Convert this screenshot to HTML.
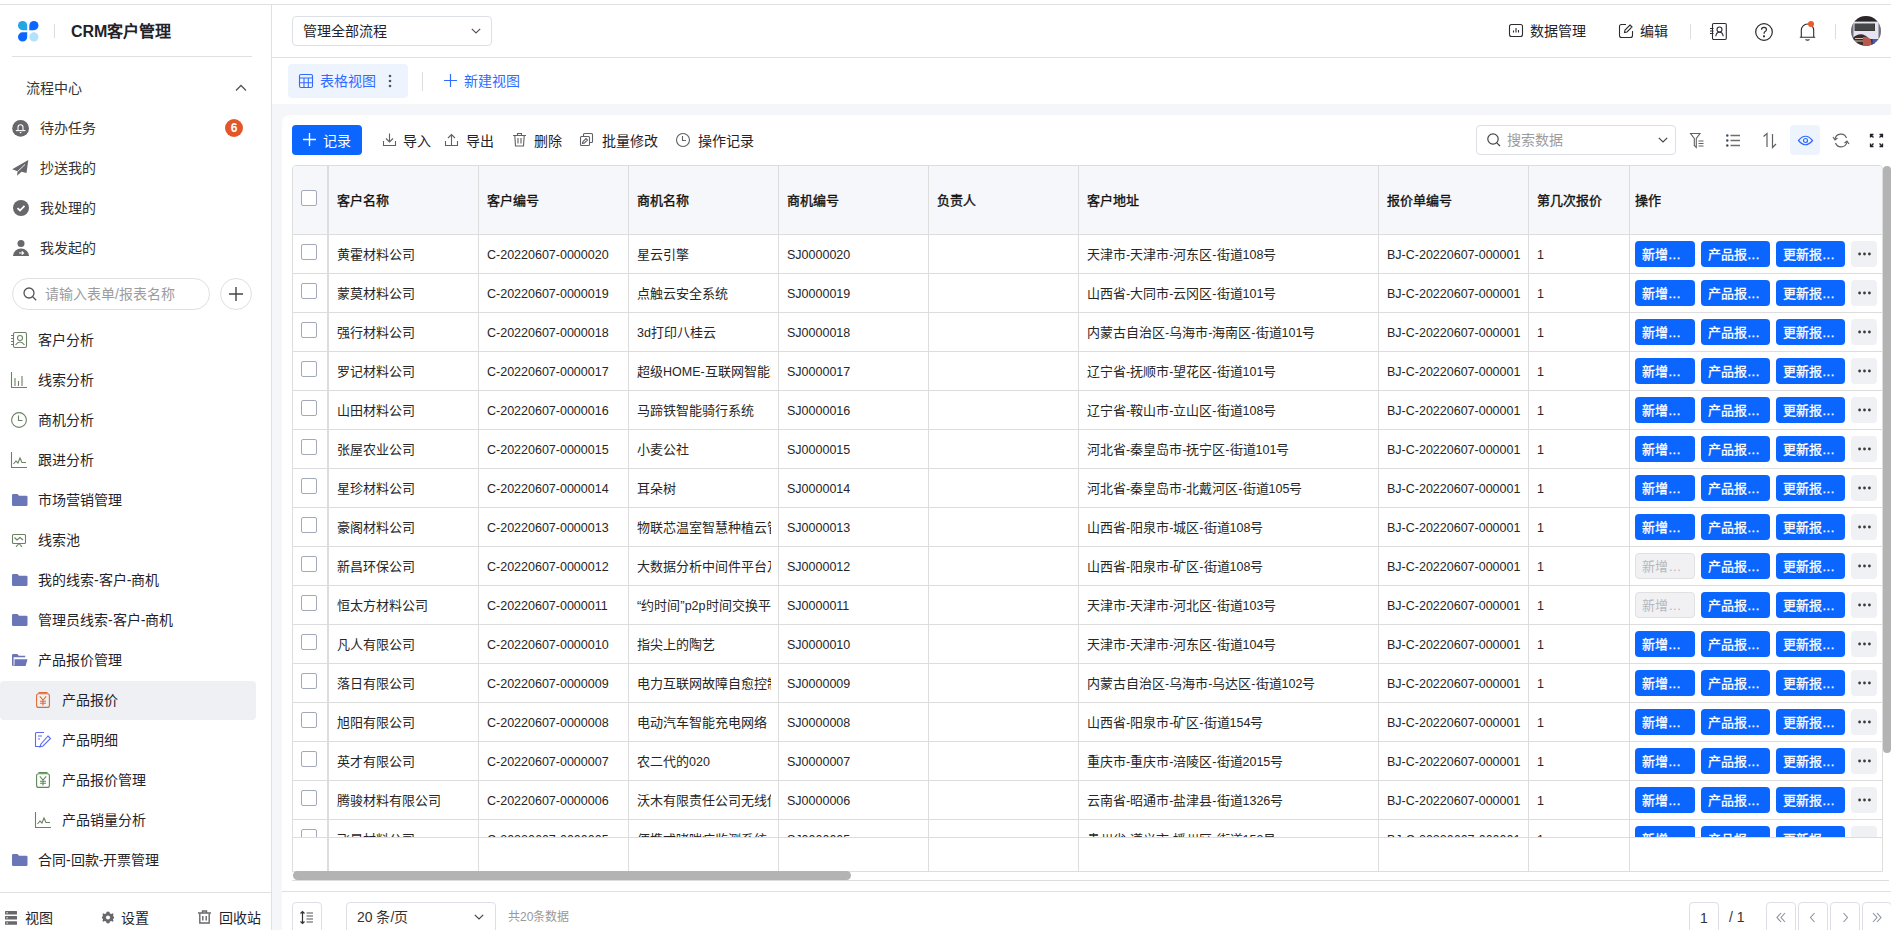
<!DOCTYPE html><html lang="zh-CN"><head><meta charset="utf-8"><title>CRM</title><style>*{box-sizing:border-box;margin:0;padding:0}
html,body{width:1891px;height:930px;overflow:hidden}
body{position:relative;background:#fff;font-family:"Liberation Sans",sans-serif;color:#1f2329;white-space:nowrap}
.a{position:absolute}
svg{position:absolute;overflow:visible}
.l{font-size:12.5px}
.dd{letter-spacing:0.5px;margin-left:1px}
</style></head><body>
<div class="a" style="left:0;top:0;width:1891px;height:4px;background:#fff"></div>
<div class="a" style="left:0;top:4px;width:1891px;height:1px;background:#e0e0e2"></div>
<div class="a" style="left:271px;top:5px;width:1px;height:925px;background:#e0e0e2"></div>
<svg style="left:18px;top:21px" width="20.5" height="20.5" viewBox="0 0 21 21">
<path d="M9.4 9.4 H4.7 A4.7 4.7 0 1 1 9.4 4.7Z" fill="#23a6e3"/>
<path d="M11.6 9.4 H16.3 A4.7 4.7 0 1 0 11.6 4.7Z" fill="#0a66ff"/>
<path d="M9.4 11.6 H4.7 A4.7 4.7 0 1 0 9.4 16.3Z" fill="#0a66ff"/>
<circle cx="16.3" cy="16.3" r="4.7" fill="#b4e1fb"/>
</svg>
<div class="a" style="left:54px;top:24px;width:1px;height:14px;background:#dcdde1"></div>
<div class="a" style="left:71px;top:19.5px;line-height:24px;font-size:16px;color:#1f2329;font-weight:bold;">CRM客户管理</div>
<div class="a" style="left:12px;top:56px;width:240px;height:1px;background:#e0e0e2"></div>
<div class="a" style="left:26px;top:78.0px;line-height:20px;font-size:14px;color:#333;font-weight:normal;">流程中心</div>
<svg style="left:235px;top:84px" width="12" height="8" viewBox="0 0 12 8"><path d="M1 6.5 L6 1.5 L11 6.5" fill="none" stroke="#555" stroke-width="1.3"/></svg>
<svg style="left:12px;top:120px" width="17" height="17" viewBox="0 0 17 17"><circle cx="8.6" cy="8.4" r="8.4" fill="#67676c"/><path d="M6 10.4 V7.2 A2.5 2.5 0 0 1 11 7.2 V10.4" fill="none" stroke="#fff" stroke-width="1.1"/><path d="M3.8 10.6 H13.4" stroke="#fff" stroke-width="1.1"/><path d="M7.4 12 H9.8 L8.6 13.6Z" fill="#fff"/></svg>
<div class="a" style="left:40px;top:118.0px;line-height:20px;font-size:14px;color:#333;font-weight:normal;">待办任务</div>
<svg style="left:12px;top:160px" width="17" height="17" viewBox="0 0 17 17"><path d="M0.2 9.2 L16.3 0.1 L14.5 13 L9.5 11.8 L5 15.8 L5.6 11.2Z" fill="#67676c"/><path d="M5.6 11.5 L13 4.5" stroke="#fff" stroke-width="0.9"/></svg>
<div class="a" style="left:40px;top:158.0px;line-height:20px;font-size:14px;color:#333;font-weight:normal;">抄送我的</div>
<svg style="left:13px;top:200px" width="16" height="16" viewBox="0 0 16 16"><circle cx="8" cy="8" r="8" fill="#67676c"/><path d="M4.5 8.2 L7 10.5 L11.5 5.8" fill="none" stroke="#fff" stroke-width="1.8"/></svg>
<div class="a" style="left:40px;top:198.0px;line-height:20px;font-size:14px;color:#333;font-weight:normal;">我处理的</div>
<svg style="left:13px;top:240px" width="16" height="16" viewBox="0 0 16 16"><circle cx="8" cy="3.5" r="3.5" fill="#67676c"/><path d="M0 16 A8 7.5 0 0 1 16 16Z" fill="#67676c"/><path d="M6 13 L10.5 13 M8.8 11.3 L10.5 13 L8.8 14.7" fill="none" stroke="#fff" stroke-width="1.2"/></svg>
<div class="a" style="left:40px;top:238.0px;line-height:20px;font-size:14px;color:#333;font-weight:normal;">我发起的</div>
<div class="a" style="left:225px;top:119px;width:18px;height:18px;border-radius:9px;background:#e3562b;color:#fff;font-size:12px;line-height:18px;text-align:center;font-weight:bold">6</div>
<div class="a" style="left:12px;top:278px;width:198px;height:32px;border:1px solid #dfe0e4;border-radius:16px;background:#fff"></div>
<svg style="left:23px;top:287px" width="14" height="14" viewBox="0 0 14 14"><circle cx="6" cy="6" r="5" fill="none" stroke="#555" stroke-width="1.3"/><path d="M9.7 9.7 L13.2 13.2" stroke="#555" stroke-width="1.3"/></svg>
<div class="a" style="left:45px;top:284.0px;line-height:20px;font-size:14px;color:#9c9c9f;font-weight:normal;">请输入表单/报表名称</div>
<div class="a" style="left:220px;top:278px;width:32px;height:32px;border:1px solid #dfe0e4;border-radius:16px;background:#fff"></div>
<svg style="left:229px;top:287px" width="14" height="14" viewBox="0 0 14 14"><path d="M7 0 V14 M0 7 H14" stroke="#444" stroke-width="1.4"/></svg>
<svg style="left:11px;top:332px" width="16" height="16" viewBox="0 0 16 16" fill="none" stroke="#6b8263" stroke-width="1.1"><rect x="2.5" y="0.5" width="13" height="15" rx="1.5"/><circle cx="9" cy="6" r="2.5"/><path d="M4.5 13 Q9 7 13.5 13"/><path d="M0 3.5 H3 M0 6.5 H3 M0 9.5 H3 M0 12.5 H3"/></svg>
<div class="a" style="left:38px;top:330.0px;line-height:20px;font-size:14px;color:#1f2329;font-weight:normal;">客户分析</div>
<svg style="left:11px;top:372px" width="16" height="16" viewBox="0 0 16 16" fill="none" stroke="#6b8263" stroke-width="1.1"><path d="M0.5 0 V15.5 H16"/><path d="M4 6 V14 M7.5 9 V14 M11 4 V14"/></svg>
<div class="a" style="left:38px;top:370.0px;line-height:20px;font-size:14px;color:#1f2329;font-weight:normal;">线索分析</div>
<svg style="left:11px;top:412px" width="16" height="16" viewBox="0 0 16 16" fill="none" stroke="#6b8263" stroke-width="1.1"><circle cx="8" cy="8" r="7.4"/><path d="M7.5 3.5 V8.5 H11.5"/></svg>
<div class="a" style="left:38px;top:410.0px;line-height:20px;font-size:14px;color:#1f2329;font-weight:normal;">商机分析</div>
<svg style="left:11px;top:452px" width="16" height="16" viewBox="0 0 16 16" fill="none" stroke="#6b8263" stroke-width="1.1"><path d="M0.5 0 V15.5 H16"/><path d="M2.5 12 L5 9 L7 11 L9 6 L11 10.5 H15"/></svg>
<div class="a" style="left:38px;top:450.0px;line-height:20px;font-size:14px;color:#1f2329;font-weight:normal;">跟进分析</div>
<svg style="left:11.5px;top:494px" width="15.5" height="12" viewBox="0 0 15.5 12"><path d="M0 1.2 Q0 0 1.2 0 L5.5 0 L7 1.8 L14.3 1.8 Q15.5 1.8 15.5 3 L15.5 10.8 Q15.5 12 14.3 12 L1.2 12 Q0 12 0 10.8Z" fill="#6a76b8"/></svg>
<div class="a" style="left:38px;top:490.0px;line-height:20px;font-size:14px;color:#1f2329;font-weight:normal;">市场营销管理</div>
<svg style="left:12px;top:534px" width="14" height="13" viewBox="0 0 14 13" fill="none" stroke="#6b8263" stroke-width="1.1"><rect x="0.5" y="0.5" width="13" height="9" rx="1"/><path d="M2.5 3.5 L5 6 L8 3.5 L11 6"/><path d="M7 9.5 L4 12.8 M7 9.5 L10 12.8"/></svg>
<div class="a" style="left:38px;top:530.0px;line-height:20px;font-size:14px;color:#1f2329;font-weight:normal;">线索池</div>
<svg style="left:11.5px;top:574px" width="15.5" height="12" viewBox="0 0 15.5 12"><path d="M0 1.2 Q0 0 1.2 0 L5.5 0 L7 1.8 L14.3 1.8 Q15.5 1.8 15.5 3 L15.5 10.8 Q15.5 12 14.3 12 L1.2 12 Q0 12 0 10.8Z" fill="#6a76b8"/></svg>
<div class="a" style="left:38px;top:570.0px;line-height:20px;font-size:14px;color:#1f2329;font-weight:normal;">我的线索-客户-商机</div>
<svg style="left:11.5px;top:614px" width="15.5" height="12" viewBox="0 0 15.5 12"><path d="M0 1.2 Q0 0 1.2 0 L5.5 0 L7 1.8 L14.3 1.8 Q15.5 1.8 15.5 3 L15.5 10.8 Q15.5 12 14.3 12 L1.2 12 Q0 12 0 10.8Z" fill="#6a76b8"/></svg>
<div class="a" style="left:38px;top:610.0px;line-height:20px;font-size:14px;color:#1f2329;font-weight:normal;">管理员线索-客户-商机</div>
<svg style="left:11.5px;top:654px" width="15.5" height="12" viewBox="0 0 15.5 12"><path d="M0 1.2 Q0 0 1.2 0 H5.3 L6.8 1.8 H13.2 V3.2 H1.6 V12 H1 Q0 12 0 11Z" fill="#6a76b8"/><path d="M2.5 5.2 H15.5 L13.6 12 H0.6 Q2.5 12 2.5 10.5Z" fill="#6a76b8"/></svg>
<div class="a" style="left:38px;top:650.0px;line-height:20px;font-size:14px;color:#1f2329;font-weight:normal;">产品报价管理</div>
<div class="a" style="left:0;top:681px;width:256px;height:39px;border-radius:4px;background:#eff0f4"></div>
<svg style="left:36px;top:692px" width="14" height="16" viewBox="0 0 14 16" fill="none" stroke="#e06a32" stroke-width="1.1"><rect x="0.6" y="1.8" width="12.8" height="13.6" rx="2"/><path d="M2.5 0.6 H11.5" stroke-width="1.2"/><path d="M3.8 4.3 L7 8 L10.2 4.3 M7 8 V13.5 M4 9.2 H10 M4 11.3 H10"/></svg>
<div class="a" style="left:62px;top:690.0px;line-height:20px;font-size:14px;color:#1f2329;font-weight:normal;">产品报价</div>
<svg style="left:35px;top:732px" width="16" height="16" viewBox="0 0 16 16" fill="none" stroke="#5a6cf0" stroke-width="1.1"><path d="M9 0.5 H1.5 Q0.5 0.5 0.5 1.5 V14.5 H7"/><path d="M3 4 H7 M3 7 H5"/><path d="M13 4 L15.5 6.5 L8 14 L5 15 L6 12Z"/></svg>
<div class="a" style="left:62px;top:730.0px;line-height:20px;font-size:14px;color:#1f2329;font-weight:normal;">产品明细</div>
<svg style="left:36px;top:772px" width="14" height="16" viewBox="0 0 14 16" fill="none" stroke="#5a8a55" stroke-width="1.1"><rect x="0.6" y="1.8" width="12.8" height="13.6" rx="2"/><path d="M2.5 0.6 H11.5" stroke-width="1.2"/><path d="M3.8 4.3 L7 8 L10.2 4.3 M7 8 V13.5 M4 9.2 H10 M4 11.3 H10"/></svg>
<div class="a" style="left:62px;top:770.0px;line-height:20px;font-size:14px;color:#1f2329;font-weight:normal;">产品报价管理</div>
<svg style="left:35px;top:812px" width="16" height="16" viewBox="0 0 16 16" fill="none" stroke="#6b8263" stroke-width="1.1"><path d="M0.5 0 V15.5 H16"/><path d="M2.5 12 L5 9 L7 11 L9 6 L11 10.5 H15"/></svg>
<div class="a" style="left:62px;top:810.0px;line-height:20px;font-size:14px;color:#1f2329;font-weight:normal;">产品销量分析</div>
<svg style="left:11.5px;top:854px" width="15.5" height="12" viewBox="0 0 15.5 12"><path d="M0 1.2 Q0 0 1.2 0 L5.5 0 L7 1.8 L14.3 1.8 Q15.5 1.8 15.5 3 L15.5 10.8 Q15.5 12 14.3 12 L1.2 12 Q0 12 0 10.8Z" fill="#6a76b8"/></svg>
<div class="a" style="left:38px;top:850.0px;line-height:20px;font-size:14px;color:#1f2329;font-weight:normal;">合同-回款-开票管理</div>
<div class="a" style="left:0;top:892px;width:271px;height:1px;background:#e0e0e2"></div>
<svg style="left:5px;top:911px" width="12" height="14" viewBox="0 0 12 14"><rect x="0" y="0" width="12" height="3.5" rx="0.5" fill="#67676c"/><rect x="0" y="5" width="12" height="3.5" rx="0.5" fill="#67676c"/><rect x="0" y="10.2" width="12" height="3.5" rx="0.5" fill="#67676c"/><rect x="1.5" y="1.2" width="1.2" height="1.2" fill="#fff"/><rect x="1.5" y="6.2" width="1.2" height="1.2" fill="#fff"/><rect x="1.5" y="11.4" width="1.2" height="1.2" fill="#fff"/></svg>
<div class="a" style="left:25px;top:908.0px;line-height:20px;font-size:14px;color:#1f2329;font-weight:normal;">视图</div>
<svg style="left:101px;top:911px" width="14" height="13" viewBox="0 0 14 14"><path d="M7 0.5 L8.6 1 L9 2.6 L10.6 3.2 L12 2.3 L13 3.6 L12.3 5.1 L13.5 6.5 L13.5 7.5 L12.3 8.9 L13 10.4 L12 11.7 L10.6 10.8 L9 11.4 L8.6 13 L7 13.5 L5.4 13 L5 11.4 L3.4 10.8 L2 11.7 L1 10.4 L1.7 8.9 L0.5 7.5 L0.5 6.5 L1.7 5.1 L1 3.6 L2 2.3 L3.4 3.2 L5 2.6 L5.4 1Z" fill="#67676c"/><circle cx="7" cy="7" r="2.2" fill="#fff"/></svg>
<div class="a" style="left:121px;top:908.0px;line-height:20px;font-size:14px;color:#1f2329;font-weight:normal;">设置</div>
<svg style="left:198px;top:910px" width="13" height="14" viewBox="0 0 13 14" fill="none" stroke="#67676c" stroke-width="1.4"><path d="M0 3 H13 M4.5 3 V1 H8.5 V3"/><path d="M1.8 3.5 V13 H11.2 V3.5"/><path d="M4.8 6 V10.5 M8.2 6 V10.5"/></svg>
<div class="a" style="left:219px;top:908.0px;line-height:20px;font-size:14px;color:#1f2329;font-weight:normal;">回收站</div>
<div class="a" style="left:272px;top:57px;width:1619px;height:1px;background:#e0e0e2"></div>
<div class="a" style="left:292px;top:16px;width:200px;height:30px;border:1px solid #dcdfe6;border-radius:4px;background:#fff"></div>
<div class="a" style="left:303px;top:21.0px;line-height:20px;font-size:14px;color:#1f2329;font-weight:normal;">管理全部流程</div>
<svg style="left:471px;top:28px" width="10" height="6" viewBox="0 0 10 6"><path d="M0.8 0.8 L5 5 L9.2 0.8" fill="none" stroke="#555" stroke-width="1.2"/></svg>
<svg style="left:1509px;top:24px" width="14" height="13" viewBox="0 0 14 13" fill="none" stroke="#2b2b30" stroke-width="1.1"><rect x="0.5" y="0.5" width="13" height="12" rx="2"/><path d="M4.5 8.5 V6.5 M7 8.5 V4 M9.5 8.5 V6"/></svg>
<div class="a" style="left:1530px;top:21.0px;line-height:20px;font-size:14px;color:#1f2329;font-weight:normal;">数据管理</div>
<svg style="left:1619px;top:24px" width="14" height="14" viewBox="0 0 14 14" fill="none" stroke="#2b2b30" stroke-width="1.1"><path d="M7 0.5 H2.5 Q0.5 0.5 0.5 2.5 V11.5 Q0.5 13.5 2.5 13.5 H11.5 Q13.5 13.5 13.5 11.5 V7"/><path d="M11 1 L13 3 L8 8 L5.5 8.5 L6 6Z"/></svg>
<div class="a" style="left:1640px;top:21.0px;line-height:20px;font-size:14px;color:#1f2329;font-weight:normal;">编辑</div>
<div class="a" style="left:1690px;top:24px;width:1px;height:15px;background:#dcdde1"></div>
<svg style="left:1710px;top:23px" width="17" height="17" viewBox="0 0 17 17" fill="none" stroke="#2b2b30" stroke-width="1.1"><rect x="2.5" y="0.5" width="13.8" height="16" rx="1.2"/><circle cx="9.5" cy="6.5" r="2.5"/><path d="M5.8 13.2 Q6.2 9.2 9.5 9.2 Q12.8 9.2 13.2 13.2"/><path d="M0 5.5 H3.5 M0 8 H3.5 M0 10.5 H3.5"/></svg>
<svg style="left:1755px;top:23px" width="18" height="18" viewBox="0 0 18 18" fill="none" stroke="#2b2b30" stroke-width="1.2"><circle cx="9" cy="9" r="8.3"/><path d="M6.5 6.8 Q6.5 4.3 9 4.3 Q11.5 4.3 11.5 6.6 Q11.5 8 9.8 8.8 Q9 9.3 9 10.8"/><circle cx="9" cy="13.3" r="0.5" fill="#2b2b30"/></svg>
<svg style="left:1799px;top:23px" width="17" height="18" viewBox="0 0 17 18" fill="none" stroke="#2b2b30" stroke-width="1.1"><path d="M0.8 14.3 H16.2 M2.3 14.3 V7.2 A6.2 6.2 0 0 1 14.7 7.2 V14.3"/><path d="M6.5 16.5 Q8.5 17.8 10.5 16.5"/></svg>
<div class="a" style="left:1808px;top:21px;width:6px;height:6px;border-radius:3px;background:#ee5a2c"></div>
<div class="a" style="left:1835px;top:24px;width:1px;height:15px;background:#dcdde1"></div>
<div class="a" style="left:1851px;top:16px;width:30px;height:30px;border-radius:15px;overflow:hidden"><svg style="left:0;top:0" width="30" height="30" viewBox="0 0 30 30">
<g>
<rect x="0" y="0" width="30" height="30" fill="#e6e4f2"/>
<rect x="0" y="0" width="30" height="5.6" fill="#2a2526"/>
<rect x="0" y="0" width="2.5" height="30" fill="#6f6f78"/>
<rect x="27.5" y="0" width="2.5" height="30" fill="#6f6f78"/>
<rect x="3.5" y="7.5" width="20.5" height="7.5" fill="#3a3a3c"/>
<path d="M4 9 H23 M4 11 H23 M4 13 H23" stroke="#5d6a5a" stroke-width="0.6"/>
<path d="M2 22 Q6 17.5 12 18.5 Q16 19.5 18 23 L24 23 L24 30 L2 30Z" fill="#3b2a2c"/>
<path d="M4 22.5 H14 M4 25 H13" stroke="#d8c0b0" stroke-width="1"/>
<path d="M12 21 Q17 20 20 24 L21 30 L12 30Z" fill="#b75a4e"/>
<rect x="21.5" y="23" width="6" height="7" fill="#4a5bb5"/>
</g></svg></div>
<div class="a" style="left:288px;top:64px;width:120px;height:34px;border-radius:4px;background:#eef4fe"></div>
<svg style="left:299px;top:74px" width="14" height="14" viewBox="0 0 14 14" fill="none" stroke="#2f6bff" stroke-width="1.1"><rect x="0.5" y="0.5" width="13" height="13" rx="1.5"/><path d="M0.5 4 H13.5 M0.5 8.7 H13.5 M5 4 V13.5 M9.3 4 V13.5"/></svg>
<div class="a" style="left:320px;top:71.0px;line-height:20px;font-size:14px;color:#2f6bff;font-weight:normal;">表格视图</div>
<svg style="left:388px;top:74px" width="4" height="14" viewBox="0 0 4 14"><circle cx="2" cy="2" r="1.3" fill="#555"/><circle cx="2" cy="7" r="1.3" fill="#555"/><circle cx="2" cy="12" r="1.3" fill="#555"/></svg>
<div class="a" style="left:422px;top:72px;width:1px;height:19px;background:#dcdde1"></div>
<svg style="left:444px;top:74px" width="13" height="13" viewBox="0 0 13 13"><path d="M6.5 0 V13 M0 6.5 H13" stroke="#2f6bff" stroke-width="1.2"/></svg>
<div class="a" style="left:464px;top:71.0px;line-height:20px;font-size:14px;color:#2f6bff;font-weight:normal;">新建视图</div>
<div class="a" style="left:272px;top:104px;width:1619px;height:826px;background:#f4f6f9"></div>
<div class="a" style="left:282px;top:115px;width:1620px;height:900px;border-radius:8px;background:#fff"></div>
<div class="a" style="left:292px;top:125px;width:70px;height:30px;border-radius:4px;background:#0a66ff"></div>
<svg style="left:303px;top:133px" width="13" height="13" viewBox="0 0 13 13"><path d="M6.5 0 V13 M0 6.5 H13" stroke="#fff" stroke-width="1.4"/></svg>
<div class="a" style="left:323px;top:131.0px;line-height:20px;font-size:14px;color:#fff;font-weight:normal;">记录</div>
<svg style="left:383px;top:133px" width="14" height="14" viewBox="0 0 14 14" fill="none" stroke="#606065" stroke-width="1.1"><path d="M6.5 0.5 V9 M3 5.5 L6.5 9 L10 5.5" /><path d="M0.5 8 V12.5 H12.5 V8"/></svg>
<div class="a" style="left:403px;top:131.0px;line-height:20px;font-size:14px;color:#1f2329;font-weight:normal;">导入</div>
<svg style="left:445px;top:133px" width="14" height="14" viewBox="0 0 14 14" fill="none" stroke="#606065" stroke-width="1.1"><path d="M6.5 12 V1.5 M3 5 L6.5 1.5 L10 5" /><path d="M0.5 8 V12.5 H12.5 V8"/></svg>
<div class="a" style="left:466px;top:131.0px;line-height:20px;font-size:14px;color:#1f2329;font-weight:normal;">导出</div>
<svg style="left:513px;top:133px" width="14" height="14" viewBox="0 0 14 14" fill="none" stroke="#606065" stroke-width="1.1"><path d="M0 2.5 H13 M4.5 2.5 V0.5 H8.5 V2.5"/><path d="M1.8 2.5 L2.5 13 H10.5 L11.2 2.5"/><path d="M5 5 V10.5 M8 5 V10.5"/></svg>
<div class="a" style="left:534px;top:131.0px;line-height:20px;font-size:14px;color:#1f2329;font-weight:normal;">删除</div>
<svg style="left:580px;top:133px" width="14" height="14" viewBox="0 0 14 14" fill="none" stroke="#606065" stroke-width="1.1"><rect x="0.5" y="3.5" width="9" height="9" rx="1"/><path d="M3.5 3.5 V1.5 Q3.5 0.5 4.5 0.5 H11.5 Q12.5 0.5 12.5 1.5 V8.5 Q12.5 9.5 11.5 9.5 H9.5"/><path d="M2.5 10.5 L3 8.5 L6 5.5 L7.5 7 L4.5 10Z"/></svg>
<div class="a" style="left:602px;top:131.0px;line-height:20px;font-size:14px;color:#1f2329;font-weight:normal;">批量修改</div>
<svg style="left:676px;top:133px" width="14" height="14" viewBox="0 0 14 14" fill="none" stroke="#606065" stroke-width="1.1"><circle cx="7" cy="7" r="6.5"/><path d="M6.5 3 V7.5 H10"/></svg>
<div class="a" style="left:698px;top:131.0px;line-height:20px;font-size:14px;color:#1f2329;font-weight:normal;">操作记录</div>
<div class="a" style="left:1476px;top:125px;width:200px;height:30px;border:1px solid #dcdfe6;border-radius:4px;background:#fff"></div>
<svg style="left:1487px;top:133px" width="14" height="14" viewBox="0 0 14 14" fill="none" stroke="#444" stroke-width="1.2"><circle cx="6" cy="6" r="5.2"/><path d="M9.8 9.8 L13 13"/></svg>
<div class="a" style="left:1507px;top:130.0px;line-height:20px;font-size:14px;color:#9c9c9f;font-weight:normal;">搜索数据</div>
<svg style="left:1658px;top:137px" width="10" height="6" viewBox="0 0 10 6"><path d="M0.8 0.8 L5 5 L9.2 0.8" fill="none" stroke="#444" stroke-width="1.2"/></svg>
<div class="a" style="left:1790px;top:125px;width:30px;height:30px;border-radius:4px;background:#eef4fe"></div>
<svg style="left:1690px;top:133px" width="15" height="15" viewBox="0 0 15 15" fill="none" stroke="#606065" stroke-width="1.1"><path d="M0.5 0.5 H10 L6.3 5.5 V14.5 L4.3 12.5 V5.5Z"/><path d="M8.5 8 H13.5 M8.5 10.5 H13.5 M8.5 13 H13.5"/></svg>
<svg style="left:1726px;top:134px" width="14" height="13" viewBox="0 0 14 13"><circle cx="1.3" cy="1.5" r="1.2" fill="#3a4a60"/><circle cx="1.3" cy="6.5" r="1.2" fill="#3a4a60"/><circle cx="1.3" cy="11.5" r="1.2" fill="#3a4a60"/><path d="M4.5 1.5 H14 M4.5 6.5 H14 M4.5 11.5 H14" stroke="#6c6f6a" stroke-width="1.4"/></svg>
<svg style="left:1763px;top:133px" width="14" height="15" viewBox="0 0 14 15" fill="none" stroke="#606065" stroke-width="1.2"><path d="M0.5 3.5 L4 0.5 V14"/><path d="M9.5 1 V14.5 L13 11"/></svg>
<svg style="left:1798px;top:135px" width="15" height="11" viewBox="0 0 15 11" fill="none" stroke="#2f6bff" stroke-width="1.2"><path d="M0.5 5.5 Q7.5 -3 14.5 5.5 Q7.5 14 0.5 5.5Z"/><circle cx="7.5" cy="5.5" r="2"/></svg>
<svg style="left:1833px;top:133px" width="16" height="15" viewBox="0 0 16 15" fill="none" stroke="#606065" stroke-width="1.2"><path d="M2 6 A6 6 0 0 1 13.5 5"/><path d="M14 9 A6 6 0 0 1 2.5 10"/><path d="M0 4 L2 6.8 L4.5 5" /><path d="M16 11 L14 8.2 L11.5 10"/></svg>
<svg style="left:1870px;top:134px" width="13" height="13" viewBox="0 0 13 13" fill="none" stroke="#1f2329" stroke-width="1.3"><path d="M0.5 3.5 V0.5 H3.5 M0.8 0.8 L3.5 3.5"/><path d="M9.5 0.5 H12.5 V3.5 M12.2 0.8 L9.5 3.5"/><path d="M0.5 9.5 V12.5 H3.5 M0.8 12.2 L3.5 9.5"/><path d="M12.5 9.5 V12.5 H9.5 M12.2 12.2 L9.5 9.5"/></svg>
<div class="a" style="left:292px;top:165px;width:1591px;height:707px;border:1px solid #dddddd;border-radius:4px 4px 0 0;background:#fff"></div>
<div class="a" style="left:293px;top:166px;width:1589px;height:68px;background:#f5f7fa;border-radius:3px 3px 0 0"></div>
<div class="a" style="left:293px;top:234px;width:1589px;height:1px;background:#dddddd"></div>
<div class="a" style="left:327px;top:166px;width:2px;height:705px;background:#dddddd"></div>
<div class="a" style="left:478px;top:166px;width:1px;height:705px;background:#dddddd"></div>
<div class="a" style="left:628px;top:166px;width:1px;height:705px;background:#dddddd"></div>
<div class="a" style="left:778px;top:166px;width:1px;height:705px;background:#dddddd"></div>
<div class="a" style="left:928px;top:166px;width:1px;height:705px;background:#dddddd"></div>
<div class="a" style="left:1078px;top:166px;width:1px;height:705px;background:#dddddd"></div>
<div class="a" style="left:1378px;top:166px;width:1px;height:705px;background:#dddddd"></div>
<div class="a" style="left:1528px;top:166px;width:1px;height:705px;background:#dddddd"></div>
<div class="a" style="left:1629px;top:166px;width:1px;height:705px;background:#dddddd"></div>
<div class="a" style="left:301px;top:190px;width:16px;height:16px;border:1px solid #a3a9bb;border-radius:2px;background:#fff"></div>
<div class="a" style="left:337px;top:191.0px;line-height:20px;font-size:13px;color:#111;font-weight:normal;-webkit-text-stroke:0.35px #111;">客户名称</div>
<div class="a" style="left:487px;top:191.0px;line-height:20px;font-size:13px;color:#111;font-weight:normal;-webkit-text-stroke:0.35px #111;">客户编号</div>
<div class="a" style="left:637px;top:191.0px;line-height:20px;font-size:13px;color:#111;font-weight:normal;-webkit-text-stroke:0.35px #111;">商机名称</div>
<div class="a" style="left:787px;top:191.0px;line-height:20px;font-size:13px;color:#111;font-weight:normal;-webkit-text-stroke:0.35px #111;">商机编号</div>
<div class="a" style="left:937px;top:191.0px;line-height:20px;font-size:13px;color:#111;font-weight:normal;-webkit-text-stroke:0.35px #111;">负责人</div>
<div class="a" style="left:1087px;top:191.0px;line-height:20px;font-size:13px;color:#111;font-weight:normal;-webkit-text-stroke:0.35px #111;">客户地址</div>
<div class="a" style="left:1387px;top:191.0px;line-height:20px;font-size:13px;color:#111;font-weight:normal;-webkit-text-stroke:0.35px #111;">报价单编号</div>
<div class="a" style="left:1537px;top:191.0px;line-height:20px;font-size:13px;color:#111;font-weight:normal;-webkit-text-stroke:0.35px #111;">第几次报价</div>
<div class="a" style="left:1635px;top:191.0px;line-height:20px;font-size:13px;color:#111;font-weight:normal;-webkit-text-stroke:0.35px #111;">操作</div>
<div class="a" style="left:293px;top:235px;width:1589px;height:602px;overflow:hidden">
<div class="a" style="left:8px;top:9px;width:16px;height:16px;border:1px solid #a3a9bb;border-radius:2px;background:#fff"></div>
<div class="a" style="left:44px;top:9.5px;line-height:20px;font-size:13px;color:#262626;">黄霍材料公司</div>
<div class="a" style="left:194px;top:9.5px;line-height:20px;font-size:13px;color:#262626;"><span class="l">C-20220607-0000020</span></div>
<div class="a" style="left:344px;top:9.5px;line-height:20px;font-size:13px;color:#262626;width:134px;overflow:hidden;">星云引擎</div>
<div class="a" style="left:494px;top:9.5px;line-height:20px;font-size:13px;color:#262626;"><span class="l">SJ0000020</span></div>
<div class="a" style="left:794px;top:9.5px;line-height:20px;font-size:13px;color:#262626;">天津市<span class="l">-</span>天津市<span class="l">-</span>河东区<span class="l">-</span>街道<span class="l">108</span>号</div>
<div class="a" style="left:1094px;top:9.5px;line-height:20px;font-size:13px;color:#262626;"><span class="l">BJ-C-20220607-000001</span></div>
<div class="a" style="left:1244px;top:9.5px;line-height:20px;font-size:13px;color:#262626;"><span class="l">1</span></div>
<div class="a" style="left:1342px;top:6px;width:60px;height:26px;border-radius:4px;background:#0a66ff;color:#fff;font-size:13px;line-height:27px;padding-left:6.5px;-webkit-text-stroke:0.3px #fff">新增<span class="dd">...</span></div>
<div class="a" style="left:1408px;top:6px;width:69px;height:26px;border-radius:4px;background:#0a66ff;color:#fff;font-size:13px;line-height:27px;padding-left:6.5px;-webkit-text-stroke:0.3px #fff">产品报<span class="dd">...</span></div>
<div class="a" style="left:1483px;top:6px;width:69px;height:26px;border-radius:4px;background:#0a66ff;color:#fff;font-size:13px;line-height:27px;padding-left:6.5px;-webkit-text-stroke:0.3px #fff">更新报<span class="dd">...</span></div>
<div class="a" style="left:1558px;top:6px;width:26px;height:26px;border-radius:4px;background:#f0f1f5"></div>
<svg style="left:1565px;top:17px" width="12" height="4" viewBox="0 0 12 4"><circle cx="1.6" cy="2" r="1.4" fill="#3a3a3a"/><circle cx="6.5" cy="2" r="1.4" fill="#3a3a3a"/><circle cx="11.4" cy="2" r="1.4" fill="#3a3a3a"/></svg>
<div class="a" style="left:0;top:38px;width:1589px;height:1px;background:#dddddd"></div>
<div class="a" style="left:8px;top:48px;width:16px;height:16px;border:1px solid #a3a9bb;border-radius:2px;background:#fff"></div>
<div class="a" style="left:44px;top:48.5px;line-height:20px;font-size:13px;color:#262626;">蒙莫材料公司</div>
<div class="a" style="left:194px;top:48.5px;line-height:20px;font-size:13px;color:#262626;"><span class="l">C-20220607-0000019</span></div>
<div class="a" style="left:344px;top:48.5px;line-height:20px;font-size:13px;color:#262626;width:134px;overflow:hidden;">点触云安全系统</div>
<div class="a" style="left:494px;top:48.5px;line-height:20px;font-size:13px;color:#262626;"><span class="l">SJ0000019</span></div>
<div class="a" style="left:794px;top:48.5px;line-height:20px;font-size:13px;color:#262626;">山西省<span class="l">-</span>大同市<span class="l">-</span>云冈区<span class="l">-</span>街道<span class="l">101</span>号</div>
<div class="a" style="left:1094px;top:48.5px;line-height:20px;font-size:13px;color:#262626;"><span class="l">BJ-C-20220607-000001</span></div>
<div class="a" style="left:1244px;top:48.5px;line-height:20px;font-size:13px;color:#262626;"><span class="l">1</span></div>
<div class="a" style="left:1342px;top:45px;width:60px;height:26px;border-radius:4px;background:#0a66ff;color:#fff;font-size:13px;line-height:27px;padding-left:6.5px;-webkit-text-stroke:0.3px #fff">新增<span class="dd">...</span></div>
<div class="a" style="left:1408px;top:45px;width:69px;height:26px;border-radius:4px;background:#0a66ff;color:#fff;font-size:13px;line-height:27px;padding-left:6.5px;-webkit-text-stroke:0.3px #fff">产品报<span class="dd">...</span></div>
<div class="a" style="left:1483px;top:45px;width:69px;height:26px;border-radius:4px;background:#0a66ff;color:#fff;font-size:13px;line-height:27px;padding-left:6.5px;-webkit-text-stroke:0.3px #fff">更新报<span class="dd">...</span></div>
<div class="a" style="left:1558px;top:45px;width:26px;height:26px;border-radius:4px;background:#f0f1f5"></div>
<svg style="left:1565px;top:56px" width="12" height="4" viewBox="0 0 12 4"><circle cx="1.6" cy="2" r="1.4" fill="#3a3a3a"/><circle cx="6.5" cy="2" r="1.4" fill="#3a3a3a"/><circle cx="11.4" cy="2" r="1.4" fill="#3a3a3a"/></svg>
<div class="a" style="left:0;top:77px;width:1589px;height:1px;background:#dddddd"></div>
<div class="a" style="left:8px;top:87px;width:16px;height:16px;border:1px solid #a3a9bb;border-radius:2px;background:#fff"></div>
<div class="a" style="left:44px;top:87.5px;line-height:20px;font-size:13px;color:#262626;">强行材料公司</div>
<div class="a" style="left:194px;top:87.5px;line-height:20px;font-size:13px;color:#262626;"><span class="l">C-20220607-0000018</span></div>
<div class="a" style="left:344px;top:87.5px;line-height:20px;font-size:13px;color:#262626;width:134px;overflow:hidden;"><span class="l">3d</span>打印八桂云</div>
<div class="a" style="left:494px;top:87.5px;line-height:20px;font-size:13px;color:#262626;"><span class="l">SJ0000018</span></div>
<div class="a" style="left:794px;top:87.5px;line-height:20px;font-size:13px;color:#262626;">内蒙古自治区<span class="l">-</span>乌海市<span class="l">-</span>海南区<span class="l">-</span>街道<span class="l">101</span>号</div>
<div class="a" style="left:1094px;top:87.5px;line-height:20px;font-size:13px;color:#262626;"><span class="l">BJ-C-20220607-000001</span></div>
<div class="a" style="left:1244px;top:87.5px;line-height:20px;font-size:13px;color:#262626;"><span class="l">1</span></div>
<div class="a" style="left:1342px;top:84px;width:60px;height:26px;border-radius:4px;background:#0a66ff;color:#fff;font-size:13px;line-height:27px;padding-left:6.5px;-webkit-text-stroke:0.3px #fff">新增<span class="dd">...</span></div>
<div class="a" style="left:1408px;top:84px;width:69px;height:26px;border-radius:4px;background:#0a66ff;color:#fff;font-size:13px;line-height:27px;padding-left:6.5px;-webkit-text-stroke:0.3px #fff">产品报<span class="dd">...</span></div>
<div class="a" style="left:1483px;top:84px;width:69px;height:26px;border-radius:4px;background:#0a66ff;color:#fff;font-size:13px;line-height:27px;padding-left:6.5px;-webkit-text-stroke:0.3px #fff">更新报<span class="dd">...</span></div>
<div class="a" style="left:1558px;top:84px;width:26px;height:26px;border-radius:4px;background:#f0f1f5"></div>
<svg style="left:1565px;top:95px" width="12" height="4" viewBox="0 0 12 4"><circle cx="1.6" cy="2" r="1.4" fill="#3a3a3a"/><circle cx="6.5" cy="2" r="1.4" fill="#3a3a3a"/><circle cx="11.4" cy="2" r="1.4" fill="#3a3a3a"/></svg>
<div class="a" style="left:0;top:116px;width:1589px;height:1px;background:#dddddd"></div>
<div class="a" style="left:8px;top:126px;width:16px;height:16px;border:1px solid #a3a9bb;border-radius:2px;background:#fff"></div>
<div class="a" style="left:44px;top:126.5px;line-height:20px;font-size:13px;color:#262626;">罗记材料公司</div>
<div class="a" style="left:194px;top:126.5px;line-height:20px;font-size:13px;color:#262626;"><span class="l">C-20220607-0000017</span></div>
<div class="a" style="left:344px;top:126.5px;line-height:20px;font-size:13px;color:#262626;width:134px;overflow:hidden;">超级<span class="l">HOME-</span>互联网智能家居</div>
<div class="a" style="left:494px;top:126.5px;line-height:20px;font-size:13px;color:#262626;"><span class="l">SJ0000017</span></div>
<div class="a" style="left:794px;top:126.5px;line-height:20px;font-size:13px;color:#262626;">辽宁省<span class="l">-</span>抚顺市<span class="l">-</span>望花区<span class="l">-</span>街道<span class="l">101</span>号</div>
<div class="a" style="left:1094px;top:126.5px;line-height:20px;font-size:13px;color:#262626;"><span class="l">BJ-C-20220607-000001</span></div>
<div class="a" style="left:1244px;top:126.5px;line-height:20px;font-size:13px;color:#262626;"><span class="l">1</span></div>
<div class="a" style="left:1342px;top:123px;width:60px;height:26px;border-radius:4px;background:#0a66ff;color:#fff;font-size:13px;line-height:27px;padding-left:6.5px;-webkit-text-stroke:0.3px #fff">新增<span class="dd">...</span></div>
<div class="a" style="left:1408px;top:123px;width:69px;height:26px;border-radius:4px;background:#0a66ff;color:#fff;font-size:13px;line-height:27px;padding-left:6.5px;-webkit-text-stroke:0.3px #fff">产品报<span class="dd">...</span></div>
<div class="a" style="left:1483px;top:123px;width:69px;height:26px;border-radius:4px;background:#0a66ff;color:#fff;font-size:13px;line-height:27px;padding-left:6.5px;-webkit-text-stroke:0.3px #fff">更新报<span class="dd">...</span></div>
<div class="a" style="left:1558px;top:123px;width:26px;height:26px;border-radius:4px;background:#f0f1f5"></div>
<svg style="left:1565px;top:134px" width="12" height="4" viewBox="0 0 12 4"><circle cx="1.6" cy="2" r="1.4" fill="#3a3a3a"/><circle cx="6.5" cy="2" r="1.4" fill="#3a3a3a"/><circle cx="11.4" cy="2" r="1.4" fill="#3a3a3a"/></svg>
<div class="a" style="left:0;top:155px;width:1589px;height:1px;background:#dddddd"></div>
<div class="a" style="left:8px;top:165px;width:16px;height:16px;border:1px solid #a3a9bb;border-radius:2px;background:#fff"></div>
<div class="a" style="left:44px;top:165.5px;line-height:20px;font-size:13px;color:#262626;">山田材料公司</div>
<div class="a" style="left:194px;top:165.5px;line-height:20px;font-size:13px;color:#262626;"><span class="l">C-20220607-0000016</span></div>
<div class="a" style="left:344px;top:165.5px;line-height:20px;font-size:13px;color:#262626;width:134px;overflow:hidden;">马蹄铁智能骑行系统</div>
<div class="a" style="left:494px;top:165.5px;line-height:20px;font-size:13px;color:#262626;"><span class="l">SJ0000016</span></div>
<div class="a" style="left:794px;top:165.5px;line-height:20px;font-size:13px;color:#262626;">辽宁省<span class="l">-</span>鞍山市<span class="l">-</span>立山区<span class="l">-</span>街道<span class="l">108</span>号</div>
<div class="a" style="left:1094px;top:165.5px;line-height:20px;font-size:13px;color:#262626;"><span class="l">BJ-C-20220607-000001</span></div>
<div class="a" style="left:1244px;top:165.5px;line-height:20px;font-size:13px;color:#262626;"><span class="l">1</span></div>
<div class="a" style="left:1342px;top:162px;width:60px;height:26px;border-radius:4px;background:#0a66ff;color:#fff;font-size:13px;line-height:27px;padding-left:6.5px;-webkit-text-stroke:0.3px #fff">新增<span class="dd">...</span></div>
<div class="a" style="left:1408px;top:162px;width:69px;height:26px;border-radius:4px;background:#0a66ff;color:#fff;font-size:13px;line-height:27px;padding-left:6.5px;-webkit-text-stroke:0.3px #fff">产品报<span class="dd">...</span></div>
<div class="a" style="left:1483px;top:162px;width:69px;height:26px;border-radius:4px;background:#0a66ff;color:#fff;font-size:13px;line-height:27px;padding-left:6.5px;-webkit-text-stroke:0.3px #fff">更新报<span class="dd">...</span></div>
<div class="a" style="left:1558px;top:162px;width:26px;height:26px;border-radius:4px;background:#f0f1f5"></div>
<svg style="left:1565px;top:173px" width="12" height="4" viewBox="0 0 12 4"><circle cx="1.6" cy="2" r="1.4" fill="#3a3a3a"/><circle cx="6.5" cy="2" r="1.4" fill="#3a3a3a"/><circle cx="11.4" cy="2" r="1.4" fill="#3a3a3a"/></svg>
<div class="a" style="left:0;top:194px;width:1589px;height:1px;background:#dddddd"></div>
<div class="a" style="left:8px;top:204px;width:16px;height:16px;border:1px solid #a3a9bb;border-radius:2px;background:#fff"></div>
<div class="a" style="left:44px;top:204.5px;line-height:20px;font-size:13px;color:#262626;">张屋农业公司</div>
<div class="a" style="left:194px;top:204.5px;line-height:20px;font-size:13px;color:#262626;"><span class="l">C-20220607-0000015</span></div>
<div class="a" style="left:344px;top:204.5px;line-height:20px;font-size:13px;color:#262626;width:134px;overflow:hidden;">小麦公社</div>
<div class="a" style="left:494px;top:204.5px;line-height:20px;font-size:13px;color:#262626;"><span class="l">SJ0000015</span></div>
<div class="a" style="left:794px;top:204.5px;line-height:20px;font-size:13px;color:#262626;">河北省<span class="l">-</span>秦皇岛市<span class="l">-</span>抚宁区<span class="l">-</span>街道<span class="l">101</span>号</div>
<div class="a" style="left:1094px;top:204.5px;line-height:20px;font-size:13px;color:#262626;"><span class="l">BJ-C-20220607-000001</span></div>
<div class="a" style="left:1244px;top:204.5px;line-height:20px;font-size:13px;color:#262626;"><span class="l">1</span></div>
<div class="a" style="left:1342px;top:201px;width:60px;height:26px;border-radius:4px;background:#0a66ff;color:#fff;font-size:13px;line-height:27px;padding-left:6.5px;-webkit-text-stroke:0.3px #fff">新增<span class="dd">...</span></div>
<div class="a" style="left:1408px;top:201px;width:69px;height:26px;border-radius:4px;background:#0a66ff;color:#fff;font-size:13px;line-height:27px;padding-left:6.5px;-webkit-text-stroke:0.3px #fff">产品报<span class="dd">...</span></div>
<div class="a" style="left:1483px;top:201px;width:69px;height:26px;border-radius:4px;background:#0a66ff;color:#fff;font-size:13px;line-height:27px;padding-left:6.5px;-webkit-text-stroke:0.3px #fff">更新报<span class="dd">...</span></div>
<div class="a" style="left:1558px;top:201px;width:26px;height:26px;border-radius:4px;background:#f0f1f5"></div>
<svg style="left:1565px;top:212px" width="12" height="4" viewBox="0 0 12 4"><circle cx="1.6" cy="2" r="1.4" fill="#3a3a3a"/><circle cx="6.5" cy="2" r="1.4" fill="#3a3a3a"/><circle cx="11.4" cy="2" r="1.4" fill="#3a3a3a"/></svg>
<div class="a" style="left:0;top:233px;width:1589px;height:1px;background:#dddddd"></div>
<div class="a" style="left:8px;top:243px;width:16px;height:16px;border:1px solid #a3a9bb;border-radius:2px;background:#fff"></div>
<div class="a" style="left:44px;top:243.5px;line-height:20px;font-size:13px;color:#262626;">星珍材料公司</div>
<div class="a" style="left:194px;top:243.5px;line-height:20px;font-size:13px;color:#262626;"><span class="l">C-20220607-0000014</span></div>
<div class="a" style="left:344px;top:243.5px;line-height:20px;font-size:13px;color:#262626;width:134px;overflow:hidden;">耳朵树</div>
<div class="a" style="left:494px;top:243.5px;line-height:20px;font-size:13px;color:#262626;"><span class="l">SJ0000014</span></div>
<div class="a" style="left:794px;top:243.5px;line-height:20px;font-size:13px;color:#262626;">河北省<span class="l">-</span>秦皇岛市<span class="l">-</span>北戴河区<span class="l">-</span>街道<span class="l">105</span>号</div>
<div class="a" style="left:1094px;top:243.5px;line-height:20px;font-size:13px;color:#262626;"><span class="l">BJ-C-20220607-000001</span></div>
<div class="a" style="left:1244px;top:243.5px;line-height:20px;font-size:13px;color:#262626;"><span class="l">1</span></div>
<div class="a" style="left:1342px;top:240px;width:60px;height:26px;border-radius:4px;background:#0a66ff;color:#fff;font-size:13px;line-height:27px;padding-left:6.5px;-webkit-text-stroke:0.3px #fff">新增<span class="dd">...</span></div>
<div class="a" style="left:1408px;top:240px;width:69px;height:26px;border-radius:4px;background:#0a66ff;color:#fff;font-size:13px;line-height:27px;padding-left:6.5px;-webkit-text-stroke:0.3px #fff">产品报<span class="dd">...</span></div>
<div class="a" style="left:1483px;top:240px;width:69px;height:26px;border-radius:4px;background:#0a66ff;color:#fff;font-size:13px;line-height:27px;padding-left:6.5px;-webkit-text-stroke:0.3px #fff">更新报<span class="dd">...</span></div>
<div class="a" style="left:1558px;top:240px;width:26px;height:26px;border-radius:4px;background:#f0f1f5"></div>
<svg style="left:1565px;top:251px" width="12" height="4" viewBox="0 0 12 4"><circle cx="1.6" cy="2" r="1.4" fill="#3a3a3a"/><circle cx="6.5" cy="2" r="1.4" fill="#3a3a3a"/><circle cx="11.4" cy="2" r="1.4" fill="#3a3a3a"/></svg>
<div class="a" style="left:0;top:272px;width:1589px;height:1px;background:#dddddd"></div>
<div class="a" style="left:8px;top:282px;width:16px;height:16px;border:1px solid #a3a9bb;border-radius:2px;background:#fff"></div>
<div class="a" style="left:44px;top:282.5px;line-height:20px;font-size:13px;color:#262626;">豪阁材料公司</div>
<div class="a" style="left:194px;top:282.5px;line-height:20px;font-size:13px;color:#262626;"><span class="l">C-20220607-0000013</span></div>
<div class="a" style="left:344px;top:282.5px;line-height:20px;font-size:13px;color:#262626;width:134px;overflow:hidden;">物联芯温室智慧种植云管理</div>
<div class="a" style="left:494px;top:282.5px;line-height:20px;font-size:13px;color:#262626;"><span class="l">SJ0000013</span></div>
<div class="a" style="left:794px;top:282.5px;line-height:20px;font-size:13px;color:#262626;">山西省<span class="l">-</span>阳泉市<span class="l">-</span>城区<span class="l">-</span>街道<span class="l">108</span>号</div>
<div class="a" style="left:1094px;top:282.5px;line-height:20px;font-size:13px;color:#262626;"><span class="l">BJ-C-20220607-000001</span></div>
<div class="a" style="left:1244px;top:282.5px;line-height:20px;font-size:13px;color:#262626;"><span class="l">1</span></div>
<div class="a" style="left:1342px;top:279px;width:60px;height:26px;border-radius:4px;background:#0a66ff;color:#fff;font-size:13px;line-height:27px;padding-left:6.5px;-webkit-text-stroke:0.3px #fff">新增<span class="dd">...</span></div>
<div class="a" style="left:1408px;top:279px;width:69px;height:26px;border-radius:4px;background:#0a66ff;color:#fff;font-size:13px;line-height:27px;padding-left:6.5px;-webkit-text-stroke:0.3px #fff">产品报<span class="dd">...</span></div>
<div class="a" style="left:1483px;top:279px;width:69px;height:26px;border-radius:4px;background:#0a66ff;color:#fff;font-size:13px;line-height:27px;padding-left:6.5px;-webkit-text-stroke:0.3px #fff">更新报<span class="dd">...</span></div>
<div class="a" style="left:1558px;top:279px;width:26px;height:26px;border-radius:4px;background:#f0f1f5"></div>
<svg style="left:1565px;top:290px" width="12" height="4" viewBox="0 0 12 4"><circle cx="1.6" cy="2" r="1.4" fill="#3a3a3a"/><circle cx="6.5" cy="2" r="1.4" fill="#3a3a3a"/><circle cx="11.4" cy="2" r="1.4" fill="#3a3a3a"/></svg>
<div class="a" style="left:0;top:311px;width:1589px;height:1px;background:#dddddd"></div>
<div class="a" style="left:8px;top:321px;width:16px;height:16px;border:1px solid #a3a9bb;border-radius:2px;background:#fff"></div>
<div class="a" style="left:44px;top:321.5px;line-height:20px;font-size:13px;color:#262626;">新昌环保公司</div>
<div class="a" style="left:194px;top:321.5px;line-height:20px;font-size:13px;color:#262626;"><span class="l">C-20220607-0000012</span></div>
<div class="a" style="left:344px;top:321.5px;line-height:20px;font-size:13px;color:#262626;width:134px;overflow:hidden;">大数据分析中间件平台及应用</div>
<div class="a" style="left:494px;top:321.5px;line-height:20px;font-size:13px;color:#262626;"><span class="l">SJ0000012</span></div>
<div class="a" style="left:794px;top:321.5px;line-height:20px;font-size:13px;color:#262626;">山西省<span class="l">-</span>阳泉市<span class="l">-</span>矿区<span class="l">-</span>街道<span class="l">108</span>号</div>
<div class="a" style="left:1094px;top:321.5px;line-height:20px;font-size:13px;color:#262626;"><span class="l">BJ-C-20220607-000001</span></div>
<div class="a" style="left:1244px;top:321.5px;line-height:20px;font-size:13px;color:#262626;"><span class="l">1</span></div>
<div class="a" style="left:1342px;top:318px;width:60px;height:26px;border-radius:4px;background:#f1f1f3;border:1px solid #e0e0e3;color:#b5b7bc;font-size:13px;line-height:25px;padding-left:6px">新增<span class="dd">...</span></div>
<div class="a" style="left:1408px;top:318px;width:69px;height:26px;border-radius:4px;background:#0a66ff;color:#fff;font-size:13px;line-height:27px;padding-left:6.5px;-webkit-text-stroke:0.3px #fff">产品报<span class="dd">...</span></div>
<div class="a" style="left:1483px;top:318px;width:69px;height:26px;border-radius:4px;background:#0a66ff;color:#fff;font-size:13px;line-height:27px;padding-left:6.5px;-webkit-text-stroke:0.3px #fff">更新报<span class="dd">...</span></div>
<div class="a" style="left:1558px;top:318px;width:26px;height:26px;border-radius:4px;background:#f0f1f5"></div>
<svg style="left:1565px;top:329px" width="12" height="4" viewBox="0 0 12 4"><circle cx="1.6" cy="2" r="1.4" fill="#3a3a3a"/><circle cx="6.5" cy="2" r="1.4" fill="#3a3a3a"/><circle cx="11.4" cy="2" r="1.4" fill="#3a3a3a"/></svg>
<div class="a" style="left:0;top:350px;width:1589px;height:1px;background:#dddddd"></div>
<div class="a" style="left:8px;top:360px;width:16px;height:16px;border:1px solid #a3a9bb;border-radius:2px;background:#fff"></div>
<div class="a" style="left:44px;top:360.5px;line-height:20px;font-size:13px;color:#262626;">恒太方材料公司</div>
<div class="a" style="left:194px;top:360.5px;line-height:20px;font-size:13px;color:#262626;"><span class="l">C-20220607-0000011</span></div>
<div class="a" style="left:344px;top:360.5px;line-height:20px;font-size:13px;color:#262626;width:134px;overflow:hidden;">“约时间”<span class="l">p2p</span>时间交换平台</div>
<div class="a" style="left:494px;top:360.5px;line-height:20px;font-size:13px;color:#262626;"><span class="l">SJ0000011</span></div>
<div class="a" style="left:794px;top:360.5px;line-height:20px;font-size:13px;color:#262626;">天津市<span class="l">-</span>天津市<span class="l">-</span>河北区<span class="l">-</span>街道<span class="l">103</span>号</div>
<div class="a" style="left:1094px;top:360.5px;line-height:20px;font-size:13px;color:#262626;"><span class="l">BJ-C-20220607-000001</span></div>
<div class="a" style="left:1244px;top:360.5px;line-height:20px;font-size:13px;color:#262626;"><span class="l">1</span></div>
<div class="a" style="left:1342px;top:357px;width:60px;height:26px;border-radius:4px;background:#f1f1f3;border:1px solid #e0e0e3;color:#b5b7bc;font-size:13px;line-height:25px;padding-left:6px">新增<span class="dd">...</span></div>
<div class="a" style="left:1408px;top:357px;width:69px;height:26px;border-radius:4px;background:#0a66ff;color:#fff;font-size:13px;line-height:27px;padding-left:6.5px;-webkit-text-stroke:0.3px #fff">产品报<span class="dd">...</span></div>
<div class="a" style="left:1483px;top:357px;width:69px;height:26px;border-radius:4px;background:#0a66ff;color:#fff;font-size:13px;line-height:27px;padding-left:6.5px;-webkit-text-stroke:0.3px #fff">更新报<span class="dd">...</span></div>
<div class="a" style="left:1558px;top:357px;width:26px;height:26px;border-radius:4px;background:#f0f1f5"></div>
<svg style="left:1565px;top:368px" width="12" height="4" viewBox="0 0 12 4"><circle cx="1.6" cy="2" r="1.4" fill="#3a3a3a"/><circle cx="6.5" cy="2" r="1.4" fill="#3a3a3a"/><circle cx="11.4" cy="2" r="1.4" fill="#3a3a3a"/></svg>
<div class="a" style="left:0;top:389px;width:1589px;height:1px;background:#dddddd"></div>
<div class="a" style="left:8px;top:399px;width:16px;height:16px;border:1px solid #a3a9bb;border-radius:2px;background:#fff"></div>
<div class="a" style="left:44px;top:399.5px;line-height:20px;font-size:13px;color:#262626;">凡人有限公司</div>
<div class="a" style="left:194px;top:399.5px;line-height:20px;font-size:13px;color:#262626;"><span class="l">C-20220607-0000010</span></div>
<div class="a" style="left:344px;top:399.5px;line-height:20px;font-size:13px;color:#262626;width:134px;overflow:hidden;">指尖上的陶艺</div>
<div class="a" style="left:494px;top:399.5px;line-height:20px;font-size:13px;color:#262626;"><span class="l">SJ0000010</span></div>
<div class="a" style="left:794px;top:399.5px;line-height:20px;font-size:13px;color:#262626;">天津市<span class="l">-</span>天津市<span class="l">-</span>河东区<span class="l">-</span>街道<span class="l">104</span>号</div>
<div class="a" style="left:1094px;top:399.5px;line-height:20px;font-size:13px;color:#262626;"><span class="l">BJ-C-20220607-000001</span></div>
<div class="a" style="left:1244px;top:399.5px;line-height:20px;font-size:13px;color:#262626;"><span class="l">1</span></div>
<div class="a" style="left:1342px;top:396px;width:60px;height:26px;border-radius:4px;background:#0a66ff;color:#fff;font-size:13px;line-height:27px;padding-left:6.5px;-webkit-text-stroke:0.3px #fff">新增<span class="dd">...</span></div>
<div class="a" style="left:1408px;top:396px;width:69px;height:26px;border-radius:4px;background:#0a66ff;color:#fff;font-size:13px;line-height:27px;padding-left:6.5px;-webkit-text-stroke:0.3px #fff">产品报<span class="dd">...</span></div>
<div class="a" style="left:1483px;top:396px;width:69px;height:26px;border-radius:4px;background:#0a66ff;color:#fff;font-size:13px;line-height:27px;padding-left:6.5px;-webkit-text-stroke:0.3px #fff">更新报<span class="dd">...</span></div>
<div class="a" style="left:1558px;top:396px;width:26px;height:26px;border-radius:4px;background:#f0f1f5"></div>
<svg style="left:1565px;top:407px" width="12" height="4" viewBox="0 0 12 4"><circle cx="1.6" cy="2" r="1.4" fill="#3a3a3a"/><circle cx="6.5" cy="2" r="1.4" fill="#3a3a3a"/><circle cx="11.4" cy="2" r="1.4" fill="#3a3a3a"/></svg>
<div class="a" style="left:0;top:428px;width:1589px;height:1px;background:#dddddd"></div>
<div class="a" style="left:8px;top:438px;width:16px;height:16px;border:1px solid #a3a9bb;border-radius:2px;background:#fff"></div>
<div class="a" style="left:44px;top:438.5px;line-height:20px;font-size:13px;color:#262626;">落日有限公司</div>
<div class="a" style="left:194px;top:438.5px;line-height:20px;font-size:13px;color:#262626;"><span class="l">C-20220607-0000009</span></div>
<div class="a" style="left:344px;top:438.5px;line-height:20px;font-size:13px;color:#262626;width:134px;overflow:hidden;">电力互联网故障自愈控制系统</div>
<div class="a" style="left:494px;top:438.5px;line-height:20px;font-size:13px;color:#262626;"><span class="l">SJ0000009</span></div>
<div class="a" style="left:794px;top:438.5px;line-height:20px;font-size:13px;color:#262626;">内蒙古自治区<span class="l">-</span>乌海市<span class="l">-</span>乌达区<span class="l">-</span>街道<span class="l">102</span>号</div>
<div class="a" style="left:1094px;top:438.5px;line-height:20px;font-size:13px;color:#262626;"><span class="l">BJ-C-20220607-000001</span></div>
<div class="a" style="left:1244px;top:438.5px;line-height:20px;font-size:13px;color:#262626;"><span class="l">1</span></div>
<div class="a" style="left:1342px;top:435px;width:60px;height:26px;border-radius:4px;background:#0a66ff;color:#fff;font-size:13px;line-height:27px;padding-left:6.5px;-webkit-text-stroke:0.3px #fff">新增<span class="dd">...</span></div>
<div class="a" style="left:1408px;top:435px;width:69px;height:26px;border-radius:4px;background:#0a66ff;color:#fff;font-size:13px;line-height:27px;padding-left:6.5px;-webkit-text-stroke:0.3px #fff">产品报<span class="dd">...</span></div>
<div class="a" style="left:1483px;top:435px;width:69px;height:26px;border-radius:4px;background:#0a66ff;color:#fff;font-size:13px;line-height:27px;padding-left:6.5px;-webkit-text-stroke:0.3px #fff">更新报<span class="dd">...</span></div>
<div class="a" style="left:1558px;top:435px;width:26px;height:26px;border-radius:4px;background:#f0f1f5"></div>
<svg style="left:1565px;top:446px" width="12" height="4" viewBox="0 0 12 4"><circle cx="1.6" cy="2" r="1.4" fill="#3a3a3a"/><circle cx="6.5" cy="2" r="1.4" fill="#3a3a3a"/><circle cx="11.4" cy="2" r="1.4" fill="#3a3a3a"/></svg>
<div class="a" style="left:0;top:467px;width:1589px;height:1px;background:#dddddd"></div>
<div class="a" style="left:8px;top:477px;width:16px;height:16px;border:1px solid #a3a9bb;border-radius:2px;background:#fff"></div>
<div class="a" style="left:44px;top:477.5px;line-height:20px;font-size:13px;color:#262626;">旭阳有限公司</div>
<div class="a" style="left:194px;top:477.5px;line-height:20px;font-size:13px;color:#262626;"><span class="l">C-20220607-0000008</span></div>
<div class="a" style="left:344px;top:477.5px;line-height:20px;font-size:13px;color:#262626;width:134px;overflow:hidden;">电动汽车智能充电网络</div>
<div class="a" style="left:494px;top:477.5px;line-height:20px;font-size:13px;color:#262626;"><span class="l">SJ0000008</span></div>
<div class="a" style="left:794px;top:477.5px;line-height:20px;font-size:13px;color:#262626;">山西省<span class="l">-</span>阳泉市<span class="l">-</span>矿区<span class="l">-</span>街道<span class="l">154</span>号</div>
<div class="a" style="left:1094px;top:477.5px;line-height:20px;font-size:13px;color:#262626;"><span class="l">BJ-C-20220607-000001</span></div>
<div class="a" style="left:1244px;top:477.5px;line-height:20px;font-size:13px;color:#262626;"><span class="l">1</span></div>
<div class="a" style="left:1342px;top:474px;width:60px;height:26px;border-radius:4px;background:#0a66ff;color:#fff;font-size:13px;line-height:27px;padding-left:6.5px;-webkit-text-stroke:0.3px #fff">新增<span class="dd">...</span></div>
<div class="a" style="left:1408px;top:474px;width:69px;height:26px;border-radius:4px;background:#0a66ff;color:#fff;font-size:13px;line-height:27px;padding-left:6.5px;-webkit-text-stroke:0.3px #fff">产品报<span class="dd">...</span></div>
<div class="a" style="left:1483px;top:474px;width:69px;height:26px;border-radius:4px;background:#0a66ff;color:#fff;font-size:13px;line-height:27px;padding-left:6.5px;-webkit-text-stroke:0.3px #fff">更新报<span class="dd">...</span></div>
<div class="a" style="left:1558px;top:474px;width:26px;height:26px;border-radius:4px;background:#f0f1f5"></div>
<svg style="left:1565px;top:485px" width="12" height="4" viewBox="0 0 12 4"><circle cx="1.6" cy="2" r="1.4" fill="#3a3a3a"/><circle cx="6.5" cy="2" r="1.4" fill="#3a3a3a"/><circle cx="11.4" cy="2" r="1.4" fill="#3a3a3a"/></svg>
<div class="a" style="left:0;top:506px;width:1589px;height:1px;background:#dddddd"></div>
<div class="a" style="left:8px;top:516px;width:16px;height:16px;border:1px solid #a3a9bb;border-radius:2px;background:#fff"></div>
<div class="a" style="left:44px;top:516.5px;line-height:20px;font-size:13px;color:#262626;">英才有限公司</div>
<div class="a" style="left:194px;top:516.5px;line-height:20px;font-size:13px;color:#262626;"><span class="l">C-20220607-0000007</span></div>
<div class="a" style="left:344px;top:516.5px;line-height:20px;font-size:13px;color:#262626;width:134px;overflow:hidden;">农二代的<span class="l">020</span></div>
<div class="a" style="left:494px;top:516.5px;line-height:20px;font-size:13px;color:#262626;"><span class="l">SJ0000007</span></div>
<div class="a" style="left:794px;top:516.5px;line-height:20px;font-size:13px;color:#262626;">重庆市<span class="l">-</span>重庆市<span class="l">-</span>涪陵区<span class="l">-</span>街道<span class="l">2015</span>号</div>
<div class="a" style="left:1094px;top:516.5px;line-height:20px;font-size:13px;color:#262626;"><span class="l">BJ-C-20220607-000001</span></div>
<div class="a" style="left:1244px;top:516.5px;line-height:20px;font-size:13px;color:#262626;"><span class="l">1</span></div>
<div class="a" style="left:1342px;top:513px;width:60px;height:26px;border-radius:4px;background:#0a66ff;color:#fff;font-size:13px;line-height:27px;padding-left:6.5px;-webkit-text-stroke:0.3px #fff">新增<span class="dd">...</span></div>
<div class="a" style="left:1408px;top:513px;width:69px;height:26px;border-radius:4px;background:#0a66ff;color:#fff;font-size:13px;line-height:27px;padding-left:6.5px;-webkit-text-stroke:0.3px #fff">产品报<span class="dd">...</span></div>
<div class="a" style="left:1483px;top:513px;width:69px;height:26px;border-radius:4px;background:#0a66ff;color:#fff;font-size:13px;line-height:27px;padding-left:6.5px;-webkit-text-stroke:0.3px #fff">更新报<span class="dd">...</span></div>
<div class="a" style="left:1558px;top:513px;width:26px;height:26px;border-radius:4px;background:#f0f1f5"></div>
<svg style="left:1565px;top:524px" width="12" height="4" viewBox="0 0 12 4"><circle cx="1.6" cy="2" r="1.4" fill="#3a3a3a"/><circle cx="6.5" cy="2" r="1.4" fill="#3a3a3a"/><circle cx="11.4" cy="2" r="1.4" fill="#3a3a3a"/></svg>
<div class="a" style="left:0;top:545px;width:1589px;height:1px;background:#dddddd"></div>
<div class="a" style="left:8px;top:555px;width:16px;height:16px;border:1px solid #a3a9bb;border-radius:2px;background:#fff"></div>
<div class="a" style="left:44px;top:555.5px;line-height:20px;font-size:13px;color:#262626;">腾骏材料有限公司</div>
<div class="a" style="left:194px;top:555.5px;line-height:20px;font-size:13px;color:#262626;"><span class="l">C-20220607-0000006</span></div>
<div class="a" style="left:344px;top:555.5px;line-height:20px;font-size:13px;color:#262626;width:134px;overflow:hidden;">沃木有限责任公司无线传感</div>
<div class="a" style="left:494px;top:555.5px;line-height:20px;font-size:13px;color:#262626;"><span class="l">SJ0000006</span></div>
<div class="a" style="left:794px;top:555.5px;line-height:20px;font-size:13px;color:#262626;">云南省<span class="l">-</span>昭通市<span class="l">-</span>盐津县<span class="l">-</span>街道<span class="l">1326</span>号</div>
<div class="a" style="left:1094px;top:555.5px;line-height:20px;font-size:13px;color:#262626;"><span class="l">BJ-C-20220607-000001</span></div>
<div class="a" style="left:1244px;top:555.5px;line-height:20px;font-size:13px;color:#262626;"><span class="l">1</span></div>
<div class="a" style="left:1342px;top:552px;width:60px;height:26px;border-radius:4px;background:#0a66ff;color:#fff;font-size:13px;line-height:27px;padding-left:6.5px;-webkit-text-stroke:0.3px #fff">新增<span class="dd">...</span></div>
<div class="a" style="left:1408px;top:552px;width:69px;height:26px;border-radius:4px;background:#0a66ff;color:#fff;font-size:13px;line-height:27px;padding-left:6.5px;-webkit-text-stroke:0.3px #fff">产品报<span class="dd">...</span></div>
<div class="a" style="left:1483px;top:552px;width:69px;height:26px;border-radius:4px;background:#0a66ff;color:#fff;font-size:13px;line-height:27px;padding-left:6.5px;-webkit-text-stroke:0.3px #fff">更新报<span class="dd">...</span></div>
<div class="a" style="left:1558px;top:552px;width:26px;height:26px;border-radius:4px;background:#f0f1f5"></div>
<svg style="left:1565px;top:563px" width="12" height="4" viewBox="0 0 12 4"><circle cx="1.6" cy="2" r="1.4" fill="#3a3a3a"/><circle cx="6.5" cy="2" r="1.4" fill="#3a3a3a"/><circle cx="11.4" cy="2" r="1.4" fill="#3a3a3a"/></svg>
<div class="a" style="left:0;top:584px;width:1589px;height:1px;background:#dddddd"></div>
<div class="a" style="left:8px;top:594px;width:16px;height:16px;border:1px solid #a3a9bb;border-radius:2px;background:#fff"></div>
<div class="a" style="left:44px;top:594.5px;line-height:20px;font-size:13px;color:#262626;">飞晨材料公司</div>
<div class="a" style="left:194px;top:594.5px;line-height:20px;font-size:13px;color:#262626;"><span class="l">C-20220607-0000005</span></div>
<div class="a" style="left:344px;top:594.5px;line-height:20px;font-size:13px;color:#262626;width:134px;overflow:hidden;">便携式哮喘病监测系统</div>
<div class="a" style="left:494px;top:594.5px;line-height:20px;font-size:13px;color:#262626;"><span class="l">SJ0000005</span></div>
<div class="a" style="left:794px;top:594.5px;line-height:20px;font-size:13px;color:#262626;">贵州省<span class="l">-</span>遵义市<span class="l">-</span>播州区<span class="l">-</span>街道<span class="l">152</span>号</div>
<div class="a" style="left:1094px;top:594.5px;line-height:20px;font-size:13px;color:#262626;"><span class="l">BJ-C-20220607-000001</span></div>
<div class="a" style="left:1244px;top:594.5px;line-height:20px;font-size:13px;color:#262626;"><span class="l">1</span></div>
<div class="a" style="left:1342px;top:591px;width:60px;height:26px;border-radius:4px;background:#0a66ff;color:#fff;font-size:13px;line-height:27px;padding-left:6.5px;-webkit-text-stroke:0.3px #fff">新增<span class="dd">...</span></div>
<div class="a" style="left:1408px;top:591px;width:69px;height:26px;border-radius:4px;background:#0a66ff;color:#fff;font-size:13px;line-height:27px;padding-left:6.5px;-webkit-text-stroke:0.3px #fff">产品报<span class="dd">...</span></div>
<div class="a" style="left:1483px;top:591px;width:69px;height:26px;border-radius:4px;background:#0a66ff;color:#fff;font-size:13px;line-height:27px;padding-left:6.5px;-webkit-text-stroke:0.3px #fff">更新报<span class="dd">...</span></div>
<div class="a" style="left:1558px;top:591px;width:26px;height:26px;border-radius:4px;background:#f0f1f5"></div>
<svg style="left:1565px;top:602px" width="12" height="4" viewBox="0 0 12 4"><circle cx="1.6" cy="2" r="1.4" fill="#3a3a3a"/><circle cx="6.5" cy="2" r="1.4" fill="#3a3a3a"/><circle cx="11.4" cy="2" r="1.4" fill="#3a3a3a"/></svg>
</div>
<div class="a" style="left:293px;top:837px;width:1589px;height:1px;background:#dddddd"></div>
<div class="a" style="left:292px;top:880px;width:1597px;height:1px;background:#dddddd"></div>
<div class="a" style="left:293px;top:871px;width:558px;height:9px;border-radius:4.5px;background:#b3b3b3"></div>
<div class="a" style="left:1883px;top:166px;width:8px;height:587px;border-radius:4px;background:#b3b3b3"></div>
<div class="a" style="left:282px;top:891px;width:1609px;height:1px;background:#e0e0e0"></div>
<div class="a" style="left:292px;top:902px;width:30px;height:34px;border:1px solid #dcdfe6;border-radius:4px;background:#fff"></div>
<svg style="left:300px;top:911px" width="14" height="13" viewBox="0 0 14 13"><path d="M2.5 0.5 V12.5 M0.5 2.5 L2.5 0.5 L4.5 2.5 M0.5 10.5 L2.5 12.5 L4.5 10.5" fill="none" stroke="#333" stroke-width="1.2"/><path d="M6.5 2 H13 M6.5 5 H13 M6.5 8 H13 M6.5 11 H13" stroke="#555" stroke-width="1.2"/></svg>
<div class="a" style="left:346px;top:902px;width:150px;height:34px;border:1px solid #dcdfe6;border-radius:4px;background:#fff"></div>
<div class="a" style="left:357px;top:907.0px;line-height:20px;font-size:14px;color:#333;font-weight:normal;">20 条/页</div>
<svg style="left:474px;top:914px" width="10" height="6" viewBox="0 0 10 6"><path d="M0.8 0.8 L5 5 L9.2 0.8" fill="none" stroke="#444" stroke-width="1.2"/></svg>
<div class="a" style="left:508px;top:907.0px;line-height:20px;font-size:12px;color:#999;font-weight:normal;">共20条数据</div>
<div class="a" style="left:1689px;top:902px;width:30px;height:34px;border:1px solid #dcdfe6;border-radius:4px;background:#fff;font-size:14px;line-height:30px;text-align:center;color:#333">1</div>
<div class="a" style="left:1729px;top:907.0px;line-height:20px;font-size:14px;color:#333;font-weight:normal;">/ 1</div>
<div class="a" style="left:1766px;top:902px;width:30px;height:34px;border:1px solid #dcdfe6;border-radius:4px;background:#fff"></div>
<svg style="left:1775px;top:912px" width="12" height="11" viewBox="0 0 12 11" fill="none" stroke="#8a8f99" stroke-width="1.1"><path d="M6 1 L2 5.5 L6 10 M10 1 L6 5.5 L10 10"/></svg>
<div class="a" style="left:1798px;top:902px;width:30px;height:34px;border:1px solid #dcdfe6;border-radius:4px;background:#fff"></div>
<svg style="left:1807px;top:912px" width="12" height="11" viewBox="0 0 12 11" fill="none" stroke="#8a8f99" stroke-width="1.1"><path d="M7.5 1 L3.5 5.5 L7.5 10"/></svg>
<div class="a" style="left:1830px;top:902px;width:30px;height:34px;border:1px solid #dcdfe6;border-radius:4px;background:#fff"></div>
<svg style="left:1839px;top:912px" width="12" height="11" viewBox="0 0 12 11" fill="none" stroke="#8a8f99" stroke-width="1.1"><path d="M4.5 1 L8.5 5.5 L4.5 10"/></svg>
<div class="a" style="left:1862px;top:902px;width:30px;height:34px;border:1px solid #dcdfe6;border-radius:4px;background:#fff"></div>
<svg style="left:1871px;top:912px" width="12" height="11" viewBox="0 0 12 11" fill="none" stroke="#8a8f99" stroke-width="1.1"><path d="M2 1 L6 5.5 L2 10 M6 1 L10 5.5 L6 10"/></svg>
</body></html>
